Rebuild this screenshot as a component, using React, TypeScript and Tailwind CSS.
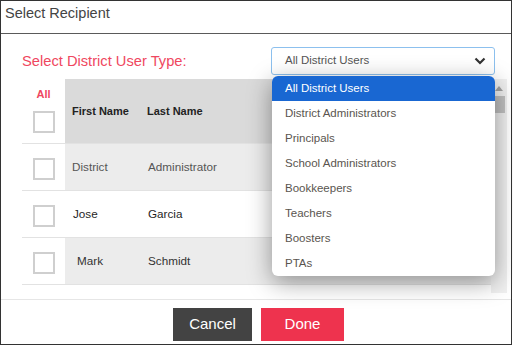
import React from 'react';

type Recipient = {
  first: string;
  last: string;
  tone: string;
  shaded: boolean;
  indent?: string;
};

const recipients: Recipient[] = [
  { first: 'District', last: 'Administrator', tone: 'text-[#555]', shaded: true },
  { first: 'Jose', last: 'Garcia', tone: 'text-[#1f1f1f]', shaded: false, indent: 'pl-[8px]' },
  { first: 'Mark', last: 'Schmidt', tone: 'text-[#333]', shaded: true, indent: 'pl-[12px]' },
];

const userTypes = [
  'All District Users',
  'District Administrators',
  'Principals',
  'School Administrators',
  'Bookkeepers',
  'Teachers',
  'Boosters',
  'PTAs',
];

const Checkbox = () => (
  <span className="block w-[22px] h-[22px] border-2 border-[#cfcfcf] bg-white" />
);

export default function App() {
  return (
    <div className="w-[512px] h-[345px] border border-[#333] bg-white flex flex-col font-['Liberation_Sans',Arial,sans-serif]">
      <div className="h-[33px] shrink-0 border-b border-[#5a5a5a] px-[4px] pb-[6px] flex items-center text-[14.5px] text-[#444]">
        Select Recipient
      </div>

      <div className="mt-[13px] pl-[21px] pr-[16px] flex items-center justify-between">
        <span className="text-[14.7px] text-[#ef4760]">Select District User Type:</span>
        <div className="relative w-[224px]">
          <div className="h-[28px] border border-[#8cc0ee] rounded-[3px] pl-[13px] pr-[5px] flex items-center justify-between text-[11.5px] text-[#555]">
            All District Users
            <svg width="12" height="8" viewBox="0 0 12 8" className="mr-[3px]">
              <polyline points="1.5,1.5 6,6 10.5,1.5" fill="none" stroke="#333" strokeWidth="2.2" />
            </svg>
          </div>
          <ul className="absolute left-[1px] top-[29px] w-[223px] z-10 bg-white rounded-[6px] overflow-hidden shadow-[0_6px_24px_rgba(0,0,0,0.4)] text-[11.5px]">
            {userTypes.map((t, i) => (
              <li
                key={t}
                className={
                  i === 0
                    ? 'h-[25px] pl-[13px] flex items-center bg-[#1967d2] text-white'
                    : 'h-[25px] pl-[13px] flex items-center text-[#5a554f]'
                }
              >
                {t}
              </li>
            ))}
          </ul>
        </div>
      </div>

      <div className="mt-[4px] ml-[21px] w-[485px] h-[214px] flex overflow-hidden">
        <div className="flex-1">
          <div className="h-[65px] flex border-b border-[#e2e2e2]">
            <div className="w-[43px] flex flex-col items-center pt-[10px]">
              <span className="text-[11px] leading-[11px] font-bold text-[#ef4760]">All</span>
              <span className="mt-[11px]"><Checkbox /></span>
            </div>
            <div className="flex-1 bg-[#dadada] flex items-center text-[11px] font-bold text-[#222]">
              <span className="w-[82px] pl-[7px]">First Name</span>
              <span>Last Name</span>
            </div>
          </div>
          {recipients.map((r) => (
            <div key={r.first} className="h-[47px] flex border-b border-[#e2e2e2]">
              <div className="w-[43px] flex items-center justify-center pt-[3px]">
                <Checkbox />
              </div>
              <div
                className={`flex-1 flex items-center text-[11.7px] ${r.tone} ${
                  r.shaded ? 'bg-[#ececec]' : 'bg-white'
                }`}
              >
                <span className={`w-[83px] ${r.indent ?? 'pl-[7px]'}`}>{r.first}</span>
                <span>{r.last}</span>
              </div>
            </div>
          ))}
        </div>
        <div className="w-[16px] bg-[#f0f0f0] flex flex-col items-center">
          <svg width="8" height="5" viewBox="0 0 8 5" className="mt-[7px]">
            <polygon points="0,5 4,0 8,5" fill="#a3a3a3" />
          </svg>
          <span className="mt-[5px] w-[11px] h-[17px] bg-[#c1c1c1]" />
        </div>
      </div>

      <div className="mt-[6px] border-t border-[#e6e6e6] pt-[8px] pl-[5px] flex justify-center gap-[9px]">
        <button className="w-[79px] h-[33px] bg-[#434343] text-white text-[15px]">Cancel</button>
        <button className="w-[83px] h-[33px] bg-[#ee334e] text-white text-[15px]">Done</button>
      </div>
    </div>
  );
}
